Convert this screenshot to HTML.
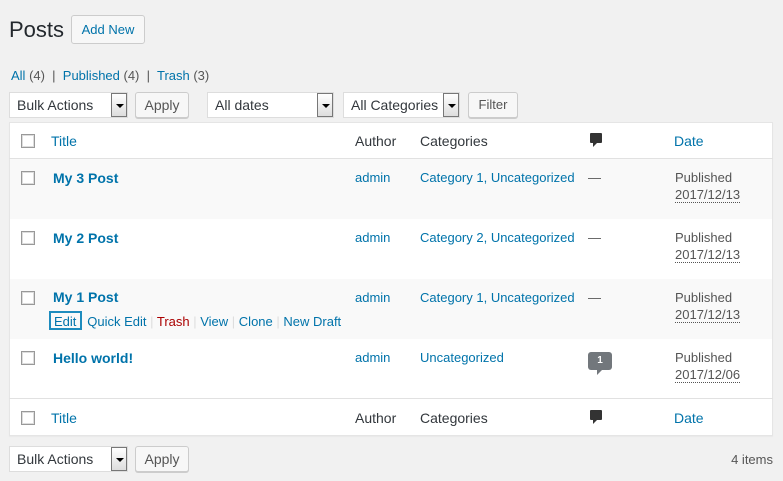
<!DOCTYPE html><html><head><style>
body{margin:0;width:783px;height:481px;background:#f1f1f1;font-family:"Liberation Sans",sans-serif;font-size:13px;color:#555;position:relative;overflow:hidden}
.a{position:absolute;white-space:nowrap}
a,.l{color:#0073aa;text-decoration:none}
.btn{position:absolute;border:1px solid #ccc;background:#f7f7f7;border-radius:3px;box-sizing:border-box;color:#555;text-align:center;box-shadow:0 1px 0 #ccc}
.sel{position:absolute;background:#fff;border:1px solid #ddd;box-sizing:border-box;height:26px;color:#32373c;font-size:14px;line-height:24px;padding-left:7px}
.sel i{position:absolute;right:0;top:0;width:16px;height:24px;background:linear-gradient(#fff,#ddd);border:1px solid #777;box-sizing:border-box}
.sel i:after{content:"";position:absolute;left:4px;top:10px;border:4px solid transparent;border-top:4px solid #000;border-bottom:0}
.cb{position:absolute;width:12px;height:12px;border:1px solid #999;background:#fff;box-shadow:inset 0 0 0 1px #ddd;left:21px}
.row{position:absolute;left:10px;width:762px;height:60px}
.t{font-weight:bold;font-size:14px;color:#0073aa}
.dt{border-bottom:1px dotted #555;color:#555}
.bub{position:absolute;left:590px;width:12px;height:10px;background:#333;border-radius:1px}
.bub:after{content:"";position:absolute;left:3px;top:10px;border-left:4px solid #333;border-right:2px solid transparent;border-bottom:4px solid transparent}
</style></head><body>
<div class="a" style="left:9px;top:17px;font-size:22px;color:#23282d">Posts</div>
<div class="btn" style="left:71px;top:15px;width:74px;height:29px;line-height:27px;color:#0073aa;font-size:13px;box-shadow:none">Add New</div>
<div class="a" style="left:11px;top:68px"><span class="l">All</span> (4) &nbsp;|&nbsp; <span class="l">Published</span> (4) &nbsp;|&nbsp; <span class="l">Trash</span> (3)</div>
<div class="sel" style="left:9px;top:92px;width:119px">Bulk Actions<i></i></div>
<div class="btn" style="left:135px;top:92px;width:54px;height:26px;line-height:24px;font-size:14px">Apply</div>
<div class="sel" style="left:207px;top:92px;width:127px">All dates<i></i></div>
<div class="sel" style="left:343px;top:92px;width:117px">All Categories<i></i></div>
<div class="btn" style="left:468px;top:92px;width:50px;height:26px;line-height:24px;font-size:13px">Filter</div>
<div style="position:absolute;left:9px;top:122px;width:764px;height:314px;background:#fff;border:1px solid #e5e5e5;box-sizing:border-box;box-shadow:0 1px 1px rgba(0,0,0,.04)"></div>
<div style="position:absolute;left:9px;top:158px;width:764px;height:1px;background:#e1e1e1"></div>
<div class="row" style="top:159px;background:#f9f9f9"></div>
<div class="row" style="top:279px;background:#f9f9f9"></div>
<div style="position:absolute;left:9px;top:398px;width:764px;height:1px;background:#e1e1e1"></div>
<div class="cb" style="top:134px"></div>
<div class="a l" style="left:51px;top:133px;font-size:14px">Title</div>
<div class="a" style="left:355px;top:133px;font-size:14px;color:#32373c">Author</div>
<div class="a" style="left:420px;top:133px;font-size:14px;color:#32373c">Categories</div>
<div class="bub" style="top:133px"></div>
<div class="a l" style="left:674px;top:133px;font-size:14px">Date</div>

<div class="cb" style="top:171px"></div><div class="a t" style="left:53px;top:170px">My 3 Post</div>
<div class="a l" style="left:355px;top:170px">admin</div><div class="a l" style="left:420px;top:170px">Category 1, Uncategorized</div>
<div class="a" style="left:588px;top:170px">—</div>
<div class="a" style="left:675px;top:170px">Published<br><span class="dt" style="line-height:20px">2017/12/13</span></div>

<div class="cb" style="top:231px"></div><div class="a t" style="left:53px;top:230px">My 2 Post</div>
<div class="a l" style="left:355px;top:230px">admin</div><div class="a l" style="left:420px;top:230px">Category 2, Uncategorized</div>
<div class="a" style="left:588px;top:230px">—</div>
<div class="a" style="left:675px;top:230px">Published<br><span class="dt" style="line-height:20px">2017/12/13</span></div>

<div class="cb" style="top:291px"></div><div class="a t" style="left:53px;top:289px;color:#0073aa">My 1 Post</div>
<div class="a l" style="left:355px;top:290px">admin</div><div class="a l" style="left:420px;top:290px">Category 1, Uncategorized</div>
<div class="a" style="left:588px;top:290px">—</div>
<div class="a" style="left:675px;top:290px">Published<br><span class="dt" style="line-height:20px">2017/12/13</span></div>
<div class="a" style="left:49px;top:311px;width:33px;height:19px;border:2px solid #1e8cbe;box-sizing:border-box"></div>
<div class="a" style="left:54px;top:314px;color:#ddd"><span class="l">Edit</span> &nbsp; <span class="l">Quick Edit</span> | <span style="color:#a00">Trash</span> | <span class="l">View</span> | <span class="l">Clone</span> | <span class="l">New Draft</span></div>

<div class="cb" style="top:351px"></div><div class="a t" style="left:53px;top:350px">Hello world!</div>
<div class="a l" style="left:355px;top:350px">admin</div><div class="a l" style="left:420px;top:350px">Uncategorized</div>
<div class="a" style="left:588px;top:352px;width:24px;height:18px;background:#72777c;border-radius:3px;color:#fff;font-size:10px;font-weight:bold;text-align:center;line-height:18px">1</div>
<div class="a" style="left:597px;top:370px;border-left:5px solid #72777c;border-bottom:5px solid transparent"></div>
<div class="a" style="left:675px;top:350px">Published<br><span class="dt" style="line-height:20px">2017/12/06</span></div>

<div class="cb" style="top:411px"></div>
<div class="a l" style="left:51px;top:410px;font-size:14px">Title</div>
<div class="a" style="left:355px;top:410px;font-size:14px;color:#32373c">Author</div>
<div class="a" style="left:420px;top:410px;font-size:14px;color:#32373c">Categories</div>
<div class="bub" style="top:410px"></div>
<div class="a l" style="left:674px;top:410px;font-size:14px">Date</div>

<div class="sel" style="left:9px;top:446px;width:119px">Bulk Actions<i></i></div>
<div class="btn" style="left:135px;top:446px;width:54px;height:26px;line-height:24px;font-size:14px">Apply</div>
<div class="a" style="right:10px;top:452px">4 items</div>
</body></html>
